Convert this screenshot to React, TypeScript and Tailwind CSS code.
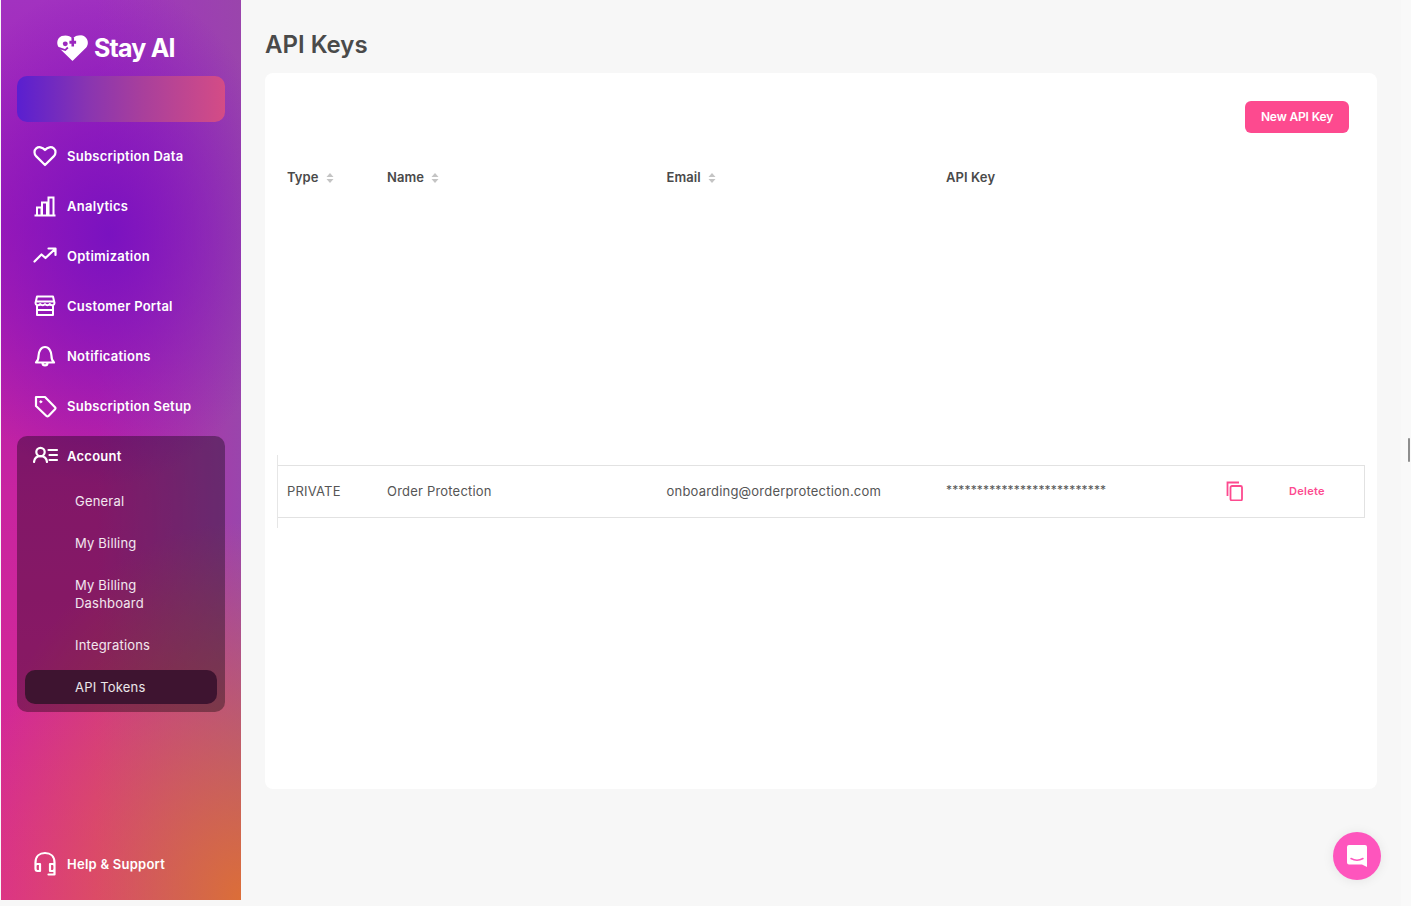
import React from "react";

const FONT = "font-['Inter','Noto_Sans',sans-serif]";

function Logo() {
  return (
    <svg width="31" height="26" viewBox="0 0 30 25" className="shrink-0">
      <mask id="logo-cut">
        <rect width="30" height="25" fill="#fff" />
        <circle cx="8" cy="8.500" r="2.400" fill="#000" />
        <path d="M14 2.500h2.500v3h2v3h-2v2.500H14V8.500h-2v-3h2Z" fill="#000" />
        <path d="M0 12 8 14.500l2.500-2.500" fill="none" stroke="#000" strokeWidth="1.800" />
      </mask>
      <path
        mask="url(#logo-cut)"
        fill="#fff"
        d="M15 25 2.500 13C-1 9.500-.5 3 4.500 1c4-1.300 8-.5 10.500 2.500C18 0 23.500-.8 27 1.500c3.500 2.500 3.800 8 .8 11Z"
      />
    </svg>
  );
}

const S = { fill: "none", stroke: "#fff", strokeWidth: 2, strokeLinecap: "round" as const, strokeLinejoin: "round" as const };

function HeartIcon() {
  return (
    <svg width="24" height="24" viewBox="0 0 24 24" {...S} strokeWidth="2.200">
      <path d="M12 21 3.300 12.400C.8 9.800 1 6.300 3.200 4.400 5.500 2.500 9.300 2.800 12 6c2.700-3.200 6.500-3.500 8.800-1.600 2.200 1.900 2.400 5.400-.1 8Z" />
    </svg>
  );
}
function ChartIcon() {
  return (
    <svg width="24" height="24" viewBox="0 0 24 24" {...S} strokeLinecap="square" strokeLinejoin="miter">
      <path d="M2.500 21.500h19M4 21v-7.500h4.500V21M9 21V8.500h5V21M15.500 21V3.500h5V21" strokeWidth="2" />
    </svg>
  );
}
function TrendIcon() {
  return (
    <svg width="24" height="24" viewBox="0 0 24 24" {...S} strokeWidth="2.200">
      <path d="M1.500 17.500 8.500 10.500 12.500 14 21.500 5.500M15.500 4.500h7v6.500" />
    </svg>
  );
}
function StoreIcon() {
  return (
    <svg width="24" height="24" viewBox="0 0 24 24" {...S} strokeWidth="2">
      <path d="M4 2.500h16L21.500 9c0 2.500-3 3-4.800 1-1.200 1.500-3.500 1.500-4.700 0-1.200 1.500-3.500 1.500-4.700 0C5.500 12 2.500 11.500 2.500 9ZM3 7.500h18M4 12V21h16v-9M4 16h16" />
    </svg>
  );
}
function BellIcon() {
  return (
    <svg width="24" height="24" viewBox="0 0 24 24" {...S} strokeWidth="2.200">
      <path d="M3 18.500c2-1.500 2.500-3 2.500-6.500 0-4.500 2.500-9 6.500-9s6.500 4.500 6.500 9c0 3.500.5 5 2.500 6.500ZM9.500 19c0 3.200 5 3.200 5 0" />
    </svg>
  );
}
function TagIcon() {
  return (
    <svg width="24" height="24" viewBox="0 0 24 24" {...S} strokeWidth="2.200">
      <path d="M3 3h9l10 10.200a1.500 1.500 0 0 1 0 2L15.500 22a1.500 1.500 0 0 1-2 0L3 12Z" />
      <circle cx="7.800" cy="7.800" r="1" fill="#fff" strokeWidth="1" />
    </svg>
  );
}
function AccountIcon() {
  return (
    <svg width="26" height="24" viewBox="0 0 26 24" {...S} strokeWidth="2.200">
      <circle cx="7.500" cy="8" r="4.200" />
      <path d="M1 18c.5-4 3-5.800 6.500-5.800s6 1.800 6.500 5.800M15.500 6h8.500M16.500 11H24M16.500 16H24" />
    </svg>
  );
}
function HeadsetIcon() {
  return (
    <svg width="24" height="26" viewBox="0 0 24 26" {...S} strokeWidth="2.200">
      <path d="M2.500 15V11.500C2.500 5.500 6.500 2 12 2s9.500 3.500 9.500 9.500V15M2.500 15.500c0-1.500 1-2.500 2-2.500h2.500v7H4.500c-1 0-2-1-2-2.500ZM21.500 15.500c0-1.500-1-2.500-2-2.500H17v7h2.500c1 0 2-1 2-2.500ZM21.500 17v6.500h-6" />
    </svg>
  );
}
function Sort() {
  return (
    <svg width="8" height="10" viewBox="0 0 8 10" className="ml-[7px]">
      <path d="M4 0 7.500 4h-7Z M4 10 .5 6h7Z" fill="#c4c4c4" />
    </svg>
  );
}
function CopyIcon() {
  return (
    <svg width="20" height="20" viewBox="0 0 20 20" fill="none" stroke="#fd4a8f" strokeWidth="1.800" className="-ml-[1px] -mt-[1px]">
      <path d="M14 1.500H2.500V15" />
      <rect x="5.500" y="5" width="11.500" height="14.500" rx="1.500" />
    </svg>
  );
}

function NavItem({ icon, label, short }: { icon: React.ReactNode; label: string; short?: boolean }) {
  return (
    <div className={"flex items-center pl-[16px] " + (short ? "h-[40px]" : "h-[50px]")}>
      <span className="flex w-[34px] justify-start">{icon}</span>
      <span className="pt-[2px] text-[13px] font-semibold tracking-[0.25px] text-white">{label}</span>
    </div>
  );
}

function SubItem({ label, active, multi }: { label: React.ReactNode; active?: boolean; multi?: boolean }) {
  return (
    <div
      className={
        "mx-[8px] flex items-center rounded-[10px] pl-[50px] text-[13px] leading-[18px] tracking-[0.2px] text-white/90 " +
        (multi ? "h-[52px] " : "h-[34px] ") +
        (active ? "bg-[#3e1430] text-white" : "")
      }
    >
      <span>{label}</span>
    </div>
  );
}

export default function App() {
  return (
    <div className={"flex h-[906px] w-[1411px] overflow-hidden bg-[#f7f7f7] text-[#4a4a4a] " + FONT}>
      <aside className="ml-[1px] flex h-[900px] w-[240px] shrink-0 flex-col px-[16px] bg-[radial-gradient(ellipse_75%_28%_at_45%_26%,#7a12c0_0%,#7a12c000_100%),radial-gradient(ellipse_115%_42%_at_100%_100%,#dc6e38_0%,#dc6e3800_100%),linear-gradient(90deg,#a020b000_40%,#9a45ac_100%),linear-gradient(180deg,#a232c0_0%,#a61cb4_25%,#c824a0_55%,#dc2c90_100%)]">
        <div className="flex h-[76px] items-center gap-[6px] pl-[40px] pt-[20px]">
          <Logo />
          <span className="pt-[2px] text-[25px] font-bold tracking-[-0.8px] text-white">Stay AI</span>
        </div>
        <div className="h-[46px] rounded-[10px] bg-[linear-gradient(90deg,#5a1fd0_0%,#8a35b0_35%,#a83f9c_60%,#d44c86_100%)]" />
        <nav className="mt-[9px]">
          <NavItem icon={<HeartIcon />} label="Subscription Data" />
          <NavItem icon={<ChartIcon />} label="Analytics" />
          <NavItem icon={<TrendIcon />} label="Optimization" />
          <NavItem icon={<StoreIcon />} label="Customer Portal" />
          <NavItem icon={<BellIcon />} label="Notifications" />
          <NavItem icon={<TagIcon />} label="Subscription Setup" />
        </nav>
        <div className="mt-[5px] rounded-[10px] bg-black/35 pb-[8px]">
          <NavItem short icon={<AccountIcon />} label="Account" />
          <div className="mt-[8px] flex flex-col gap-[8px]">
            <SubItem label="General" />
            <SubItem label="My Billing" />
            <SubItem multi label={<>My Billing<br />Dashboard</>} />
            <SubItem label="Integrations" />
            <SubItem active label="API Tokens" />
          </div>
        </div>
        <div className="mt-auto mb-[11px]">
          <NavItem icon={<HeadsetIcon />} label="Help & Support" />
        </div>
      </aside>

      <main className="flex min-w-0 flex-1 flex-col pl-[24px] pr-[24px]">
        <h1 className="mt-[28px] h-[45px] text-[24px] leading-[34px] font-semibold">API Keys</h1>
        <section className="h-[716px] rounded-[8px] bg-white px-[12px] pt-[28px]">
          <div className="flex justify-end pr-[16px]">
            <button className="h-[32px] w-[104px] rounded-[6px] bg-[#fd4a8f] text-[12px] font-semibold tracking-[-0.15px] text-white">New API Key</button>
          </div>
          <div className="mt-[33px] grid h-[24px] grid-cols-[100px_279.5px_279.5px_1fr] items-center pl-[10px] text-[13px] font-semibold tracking-[0.1px]">
            <span className="flex items-center">Type<Sort /></span>
            <span className="flex items-center">Name<Sort /></span>
            <span className="flex items-center">Email<Sort /></span>
            <span>API Key</span>
          </div>
          <div className="mt-[265px] border-l border-[#e6e6e6] py-[10px]">
            <div className="grid h-[53px] grid-cols-[100px_279.5px_279.5px_280px_63px_1fr] items-center border-y border-r border-[#e2e2e2] pl-[9px] text-[13px] tracking-[0.2px] text-[#555]">
              <span>PRIVATE</span>
              <span>Order Protection</span>
              <span>onboarding@orderprotection.com</span>
              <span className="pb-[3px] text-[12px] tracking-[0.15px]">**************************</span>
              <span className="flex"><CopyIcon /></span>
              <span className="text-[11px] font-semibold tracking-[0.3px] text-[#fd4a8f]">Delete</span>
            </div>
          </div>
        </section>
      </main>

      <div className="relative w-[10px] shrink-0 bg-[#f9f9f9]">
        <div className="absolute left-[7px] top-[438px] h-[24px] w-[2px] rounded-full bg-[#8e8e8e]" />
      </div>

      <button className="absolute left-[1333px] top-[832px] flex h-[48px] w-[48px] items-center justify-center rounded-full bg-[#fe55bd] shadow-[0_1px_12px_rgba(0,0,0,0.08)]">
        <svg width="22" height="24" viewBox="0 0 22 24">
          <path fill="#fff" d="M3 1h16a2 2 0 0 1 2 2v20l-5-2.500H3a2 2 0 0 1-2-2V3a2 2 0 0 1 2-2Z" />
          <path d="M5 14.500c3.500 2 8.500 2 12 0" fill="none" stroke="#fe55bd" strokeWidth="1.500" strokeLinecap="round" />
        </svg>
      </button>
    </div>
  );
}
